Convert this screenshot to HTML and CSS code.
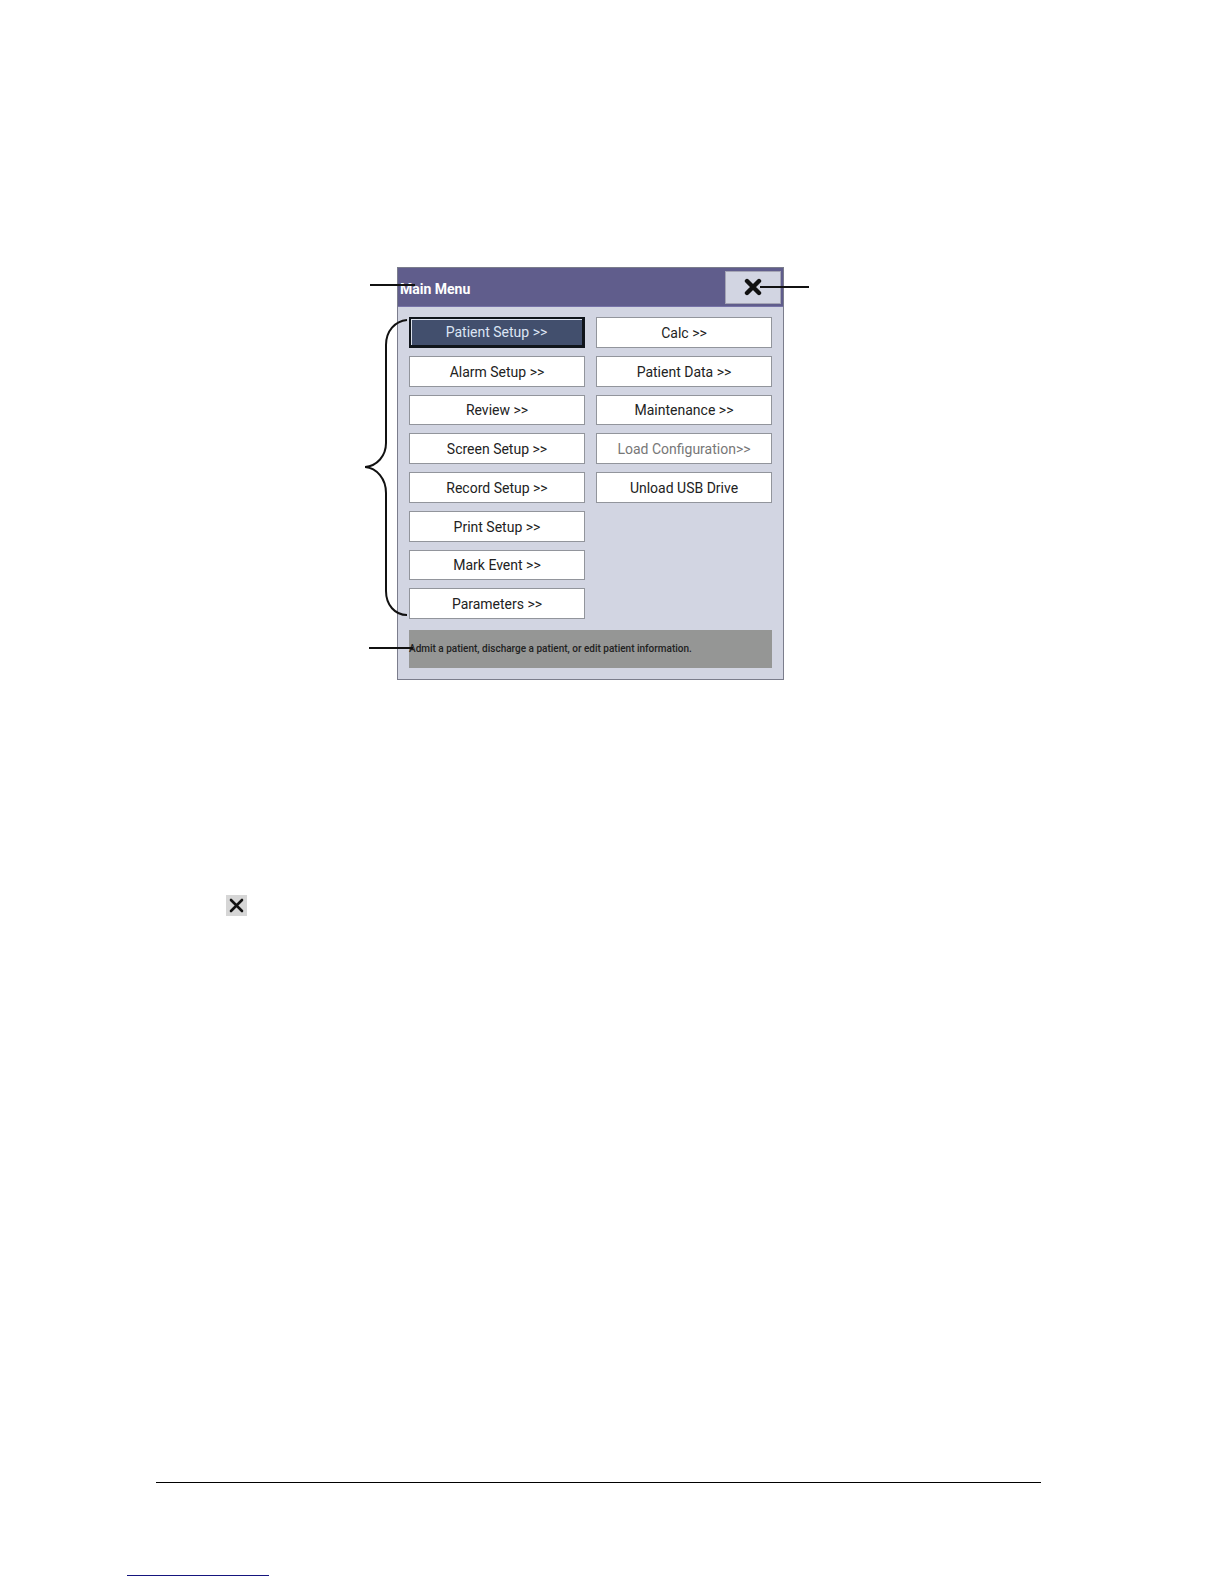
FILE: index.html
```html
<!DOCTYPE html>
<html lang="en">
<head>
<meta charset="utf-8">
<title>Main Menu</title>
<link rel="stylesheet" href="styles.css">
</head>
<body>
<div class="page">
  <main class="content">
    <div class="figure">
      <section class="dialog" aria-labelledby="menu-title">
        <header class="titlebar">
          <h1 class="title" id="menu-title">Main Menu</h1>
          <button class="close" type="button" aria-label="Close">
            <svg width="18" height="18" viewBox="0 0 18 18" aria-hidden="true"><path d="M3 3L15 15M15 3L3 15" fill="none" stroke="#111" stroke-width="4.4" stroke-linecap="round"/></svg>
          </button>
        </header>
        <div class="menu">
          <button class="item selected" type="button">Patient Setup &gt;&gt;</button>
          <button class="item" type="button">Alarm Setup &gt;&gt;</button>
          <button class="item" type="button">Review &gt;&gt;</button>
          <button class="item" type="button">Screen Setup &gt;&gt;</button>
          <button class="item" type="button">Record Setup &gt;&gt;</button>
          <button class="item" type="button">Print Setup &gt;&gt;</button>
          <button class="item" type="button">Mark Event &gt;&gt;</button>
          <button class="item" type="button">Parameters &gt;&gt;</button>
          <button class="item" type="button">Calc &gt;&gt;</button>
          <button class="item" type="button">Patient Data &gt;&gt;</button>
          <button class="item" type="button">Maintenance &gt;&gt;</button>
          <button class="item" type="button" disabled>Load Configuration&gt;&gt;</button>
          <button class="item" type="button">Unload USB Drive</button>
        </div>
        <p class="hint">Admit a patient, discharge a patient, or edit patient information.</p>
      </section>
      <svg class="callouts" width="446" height="413" viewBox="0 0 446 413" aria-hidden="true">
        <g fill="none" stroke="#111" stroke-width="2">
          <path d="M5 18H50M395 20H444M4 381H48"/>
          <path d="M42 53C30 54 21 64 21 78V176C21 189 12 199 0 200C12 201 21 212 21 226V324C21 338 30 348 42 348"/>
        </g>
      </svg>
    </div>
    <svg class="inline-close" width="21" height="21" viewBox="0 0 21 21" role="img" aria-label="Close button">
      <path d="M0 0H21V21H0Z" fill="#d6d6d6"/>
      <path d="M5 5L16 16M16 5L5 16" fill="none" stroke="#111" stroke-width="2.6" stroke-linecap="round"/>
    </svg>
  </main>
  <footer class="footer">
    <hr class="rule">
    <a class="link" href="#menu-title" aria-label="Back to menu"></a>
  </footer>
</div>
</body>
</html>
```
FILE: styles.css
```css
* {
  box-sizing: border-box;
}

body {
  margin: 0;
  background: #fff;
  color: #222;
  font: 14px/20px Roboto, "Liberation Sans", sans-serif;
}

.page {
  display: flex;
  flex-direction: column;
  min-height: 100vh;
  padding: 267px 183px 8px 127px;
}

.content {
  padding-left: 99px;
}

.figure {
  position: relative;
  max-width: 559px;
  margin-left: 139px;
  padding-left: 32px;
}

.dialog {
  width: 387px;
  max-width: 100%;
  border: 1px solid #7b7d8c;
  background: #d2d5e2;
}

.titlebar {
  display: flex;
  align-items: center;
  justify-content: space-between;
  height: 39px;
  padding: 0 2px;
  border-bottom: 1px solid #7773a8;
  background: #605d8c;
}

.title {
  margin: 4px 0 0;
  color: #fff;
  font-size: 14px;
  line-height: 20px;
}

.close {
  display: flex;
  align-items: center;
  justify-content: center;
  width: 56px;
  height: 33px;
  padding: 0;
  border: 1px solid #a5a5b5;
  background: #d2d5e2;
}

.menu {
  display: grid;
  grid-template-rows: repeat(8, 1fr);
  grid-auto-columns: 1fr;
  grid-auto-flow: column;
  gap: 8px 11px;
  height: 302px;
  margin: 10px 11px 11px;
}

.item {
  min-height: 0;
  padding: 1px 0 0;
  border: 1px solid #92959c;
  background: #fff;
  color: #222;
  font: inherit;
}

.item:disabled {
  color: #777;
}

.selected {
  border: 2px solid #10151b;
  border-width: 2px 3px 3px 2px;
  background: #424f6d;
  box-shadow: inset 1px 1px #dce1ed;
  color: #dce5f4;
}

.hint {
  display: flex;
  align-items: center;
  height: 38px;
  margin: 0 11px 11px;
  background: #959695;
  font-size: 10px;
  font-weight: 500;
}

.callouts {
  position: absolute;
  top: 0;
  left: 0;
}

.inline-close {
  display: block;
  margin-top: 215px;
}

.footer {
  margin-top: auto;
}

.rule {
  height: 1px;
  margin: 0 0 92px 29px;
  border: 0;
  background: #000;
}

.link {
  display: block;
  width: 142px;
  border-bottom: 1px solid #15157e;
}
```
